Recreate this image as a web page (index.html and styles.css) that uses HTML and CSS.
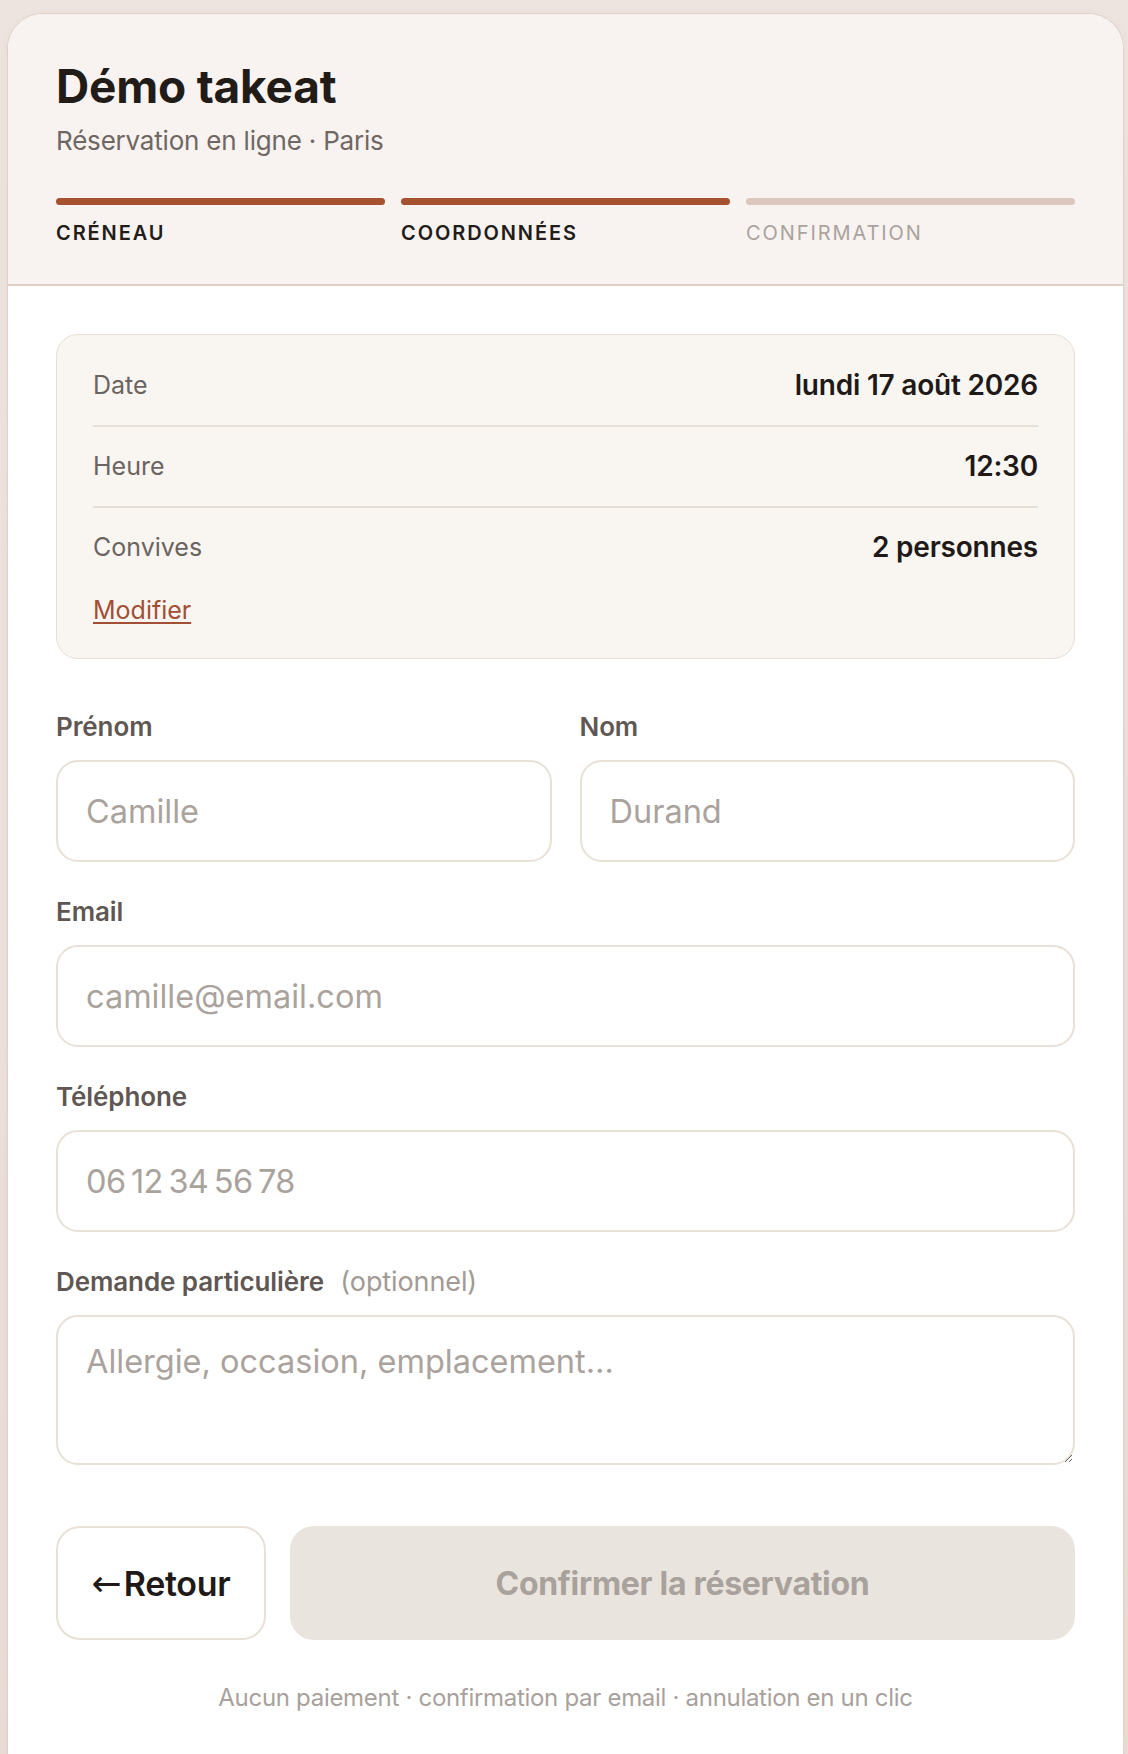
FILE: index.html
```html
<!DOCTYPE html>
<html lang="fr">
<head>
<meta charset="utf-8">
<title>Démo takeat — Réservation</title>
<link rel="stylesheet" href="styles.css">
</head>
<body>
<div class="page">
  <div class="card">
    <header class="head">
      <h1 class="title">Démo takeat</h1>
      <p class="subtitle">Réservation en ligne · Paris</p>
      <ol class="steps">
        <li class="step done"><span class="bar"></span><span class="step-label">Créneau</span></li>
        <li class="step done"><span class="bar"></span><span class="step-label">Coordonnées</span></li>
        <li class="step"><span class="bar"></span><span class="step-label">Confirmation</span></li>
      </ol>
    </header>

    <main class="body">
      <section class="summary">
        <div class="row"><span class="k">Date</span><span class="v">lundi 17 août 2026</span></div>
        <div class="row"><span class="k">Heure</span><span class="v">12:30</span></div>
        <div class="row last"><span class="k">Convives</span><span class="v">2 personnes</span></div>
        <a class="modify" href="#">Modifier</a>
      </section>

      <form class="form">
        <div class="pair">
          <label class="field">
            <span class="label">Prénom</span>
            <input class="input" type="text" placeholder="Camille">
          </label>
          <label class="field">
            <span class="label">Nom</span>
            <input class="input" type="text" placeholder="Durand">
          </label>
        </div>
        <label class="field">
          <span class="label">Email</span>
          <input class="input" type="email" placeholder="camille@email.com">
        </label>
        <label class="field">
          <span class="label">Téléphone</span>
          <input class="input tel" type="tel" placeholder="06 12 34 56 78">
        </label>
        <label class="field">
          <span class="label">Demande particulière <span class="opt">(optionnel)</span></span>
          <textarea class="input area" placeholder="Allergie, occasion, emplacement…"></textarea>
        </label>

        <div class="actions">
          <button type="button" class="btn back"><span class="arrow">←</span>Retour</button>
          <button type="button" class="btn confirm" disabled>Confirmer la réservation</button>
        </div>
      </form>

      <p class="foot">Aucun paiement · confirmation par email · annulation en un clic</p>
    </main>
  </div>
</div>
</body>
</html>
```

FILE: styles.css
```css
* { box-sizing: border-box; }

html, body {
  margin: 0;
  padding: 0;
}

body {
  background: linear-gradient(180deg, #eee4df 0%, #e9ddd7 100%);
  font-family: Inter, "Noto Sans", "Liberation Sans", sans-serif;
  color: #221c19;
}

.page {
  padding: 13px 4px 0 7px;
}

.card {
  background: #ffffff;
  border: 1px solid #dfd0c8;
  border-radius: 36px 36px 0 0;
  overflow: hidden;
  box-shadow: 0 2px 10px rgba(120, 80, 60, 0.06);
}

/* Header */
.head {
  background: #f8f3f0;
  border-bottom: 2px solid #e0cfc6;
  padding: 46px 48px 37px 48px;
}

.title {
  margin: 0;
  font-size: 46px;
  line-height: 52px;
  font-weight: 700;
  letter-spacing: -0.2px;
  color: #221c19;
}

.subtitle {
  margin: 13px 0 0 0;
  font-size: 26px;
  line-height: 32px;
  color: #6f6763;
  letter-spacing: -0.2px;
}

.steps {
  list-style: none;
  margin: 41px 0 0 0;
  padding: 0;
  display: grid;
  grid-template-columns: repeat(3, 1fr);
  gap: 16px;
}

.step {
  display: flex;
  flex-direction: column;
  gap: 14px;
}

.bar {
  display: block;
  height: 7px;
  border-radius: 4px;
  background: #dbc7bd;
}

.step.done .bar { background: #a6512f; }

.step-label {
  font-size: 20px;
  line-height: 28px;
  letter-spacing: 1.9px;
  text-transform: uppercase;
  font-weight: 400;
  color: #aaa29d;
}

.step.done .step-label {
  color: #231c19;
  font-weight: 600;
}

/* Body */
.body {
  padding: 48px 48px 48px 48px;
}

.summary {
  background: #f9f6f2;
  border: 1px solid #e7dfd6;
  border-radius: 22px;
  padding: 11px 36px 34px 36px;
}

.row {
  display: flex;
  justify-content: space-between;
  align-items: center;
  padding: 20px 0;
  line-height: 39px;
  border-bottom: 2px solid #e6e0d8;
}

.row.last { border-bottom: 0; }

.k {
  font-size: 25px;
  color: #6b6460;
}

.v {
  font-size: 28px;
  font-weight: 600;
  color: #1f1a17;
  letter-spacing: -0.2px;
}

.modify {
  display: inline-block;
  margin-top: 9px;
  font-size: 25px;
  line-height: 28px;
  color: #a24f35;
  text-decoration: underline;
  text-underline-offset: 3px;
  text-decoration-thickness: 1.5px;
}

.form {
  margin-top: 53px;
  display: flex;
  flex-direction: column;
  gap: 35px;
}

.pair {
  display: grid;
  grid-template-columns: 1fr 1fr;
  gap: 28px;
}

.field {
  display: flex;
  flex-direction: column;
  gap: 18px;
}

.label {
  font-size: 26px;
  line-height: 30px;
  font-weight: 600;
  color: #5f5753;
  letter-spacing: -0.1px;
}

.opt {
  margin-left: 10px;
  font-size: 27px;
  font-weight: 400;
  color: #a29a95;
}

.input {
  display: block;
  width: 100%;
  height: 102px;
  border: 2px solid #e7e1d7;
  border-radius: 22px;
  background: #ffffff;
  padding: 0 28px;
  font-family: inherit;
  font-size: 32.5px;
  color: #221c19;
  outline: none;
}

.input::placeholder {
  color: #aaa39d;
  opacity: 1;
}

.tel::placeholder {
  letter-spacing: -0.6px;
  word-spacing: -3px;
}

.area {
  height: 150px;
  padding: 24px 28px;
  line-height: 42px;
  resize: vertical;
}

.actions {
  margin-top: 26px;
  display: flex;
  gap: 24px;
}

.btn {
  height: 114px;
  border-radius: 24px;
  font-family: inherit;
  letter-spacing: -0.3px;
}

.back {
  flex: 0 0 auto;
  width: 210px;
  background: #ffffff;
  border: 2px solid #e7e1d7;
  color: #1f1a17;
  font-weight: 600;
  font-size: 34px;
  display: flex;
  align-items: center;
  justify-content: center;
}

.arrow {
  font-family: "DejaVu Sans", sans-serif;
  font-weight: 400;
  font-size: 36px;
  letter-spacing: 0;
  margin-right: 2px;
}

.confirm {
  flex: 1 1 auto;
  background: #e9e4de;
  border: 0;
  color: #a9a29c;
  font-weight: 700;
  font-size: 32px;
}

.foot {
  margin: 44px 0 0 0;
  text-align: center;
  font-size: 24px;
  line-height: 28px;
  color: #a8a19c;
  letter-spacing: -0.3px;
}
```
